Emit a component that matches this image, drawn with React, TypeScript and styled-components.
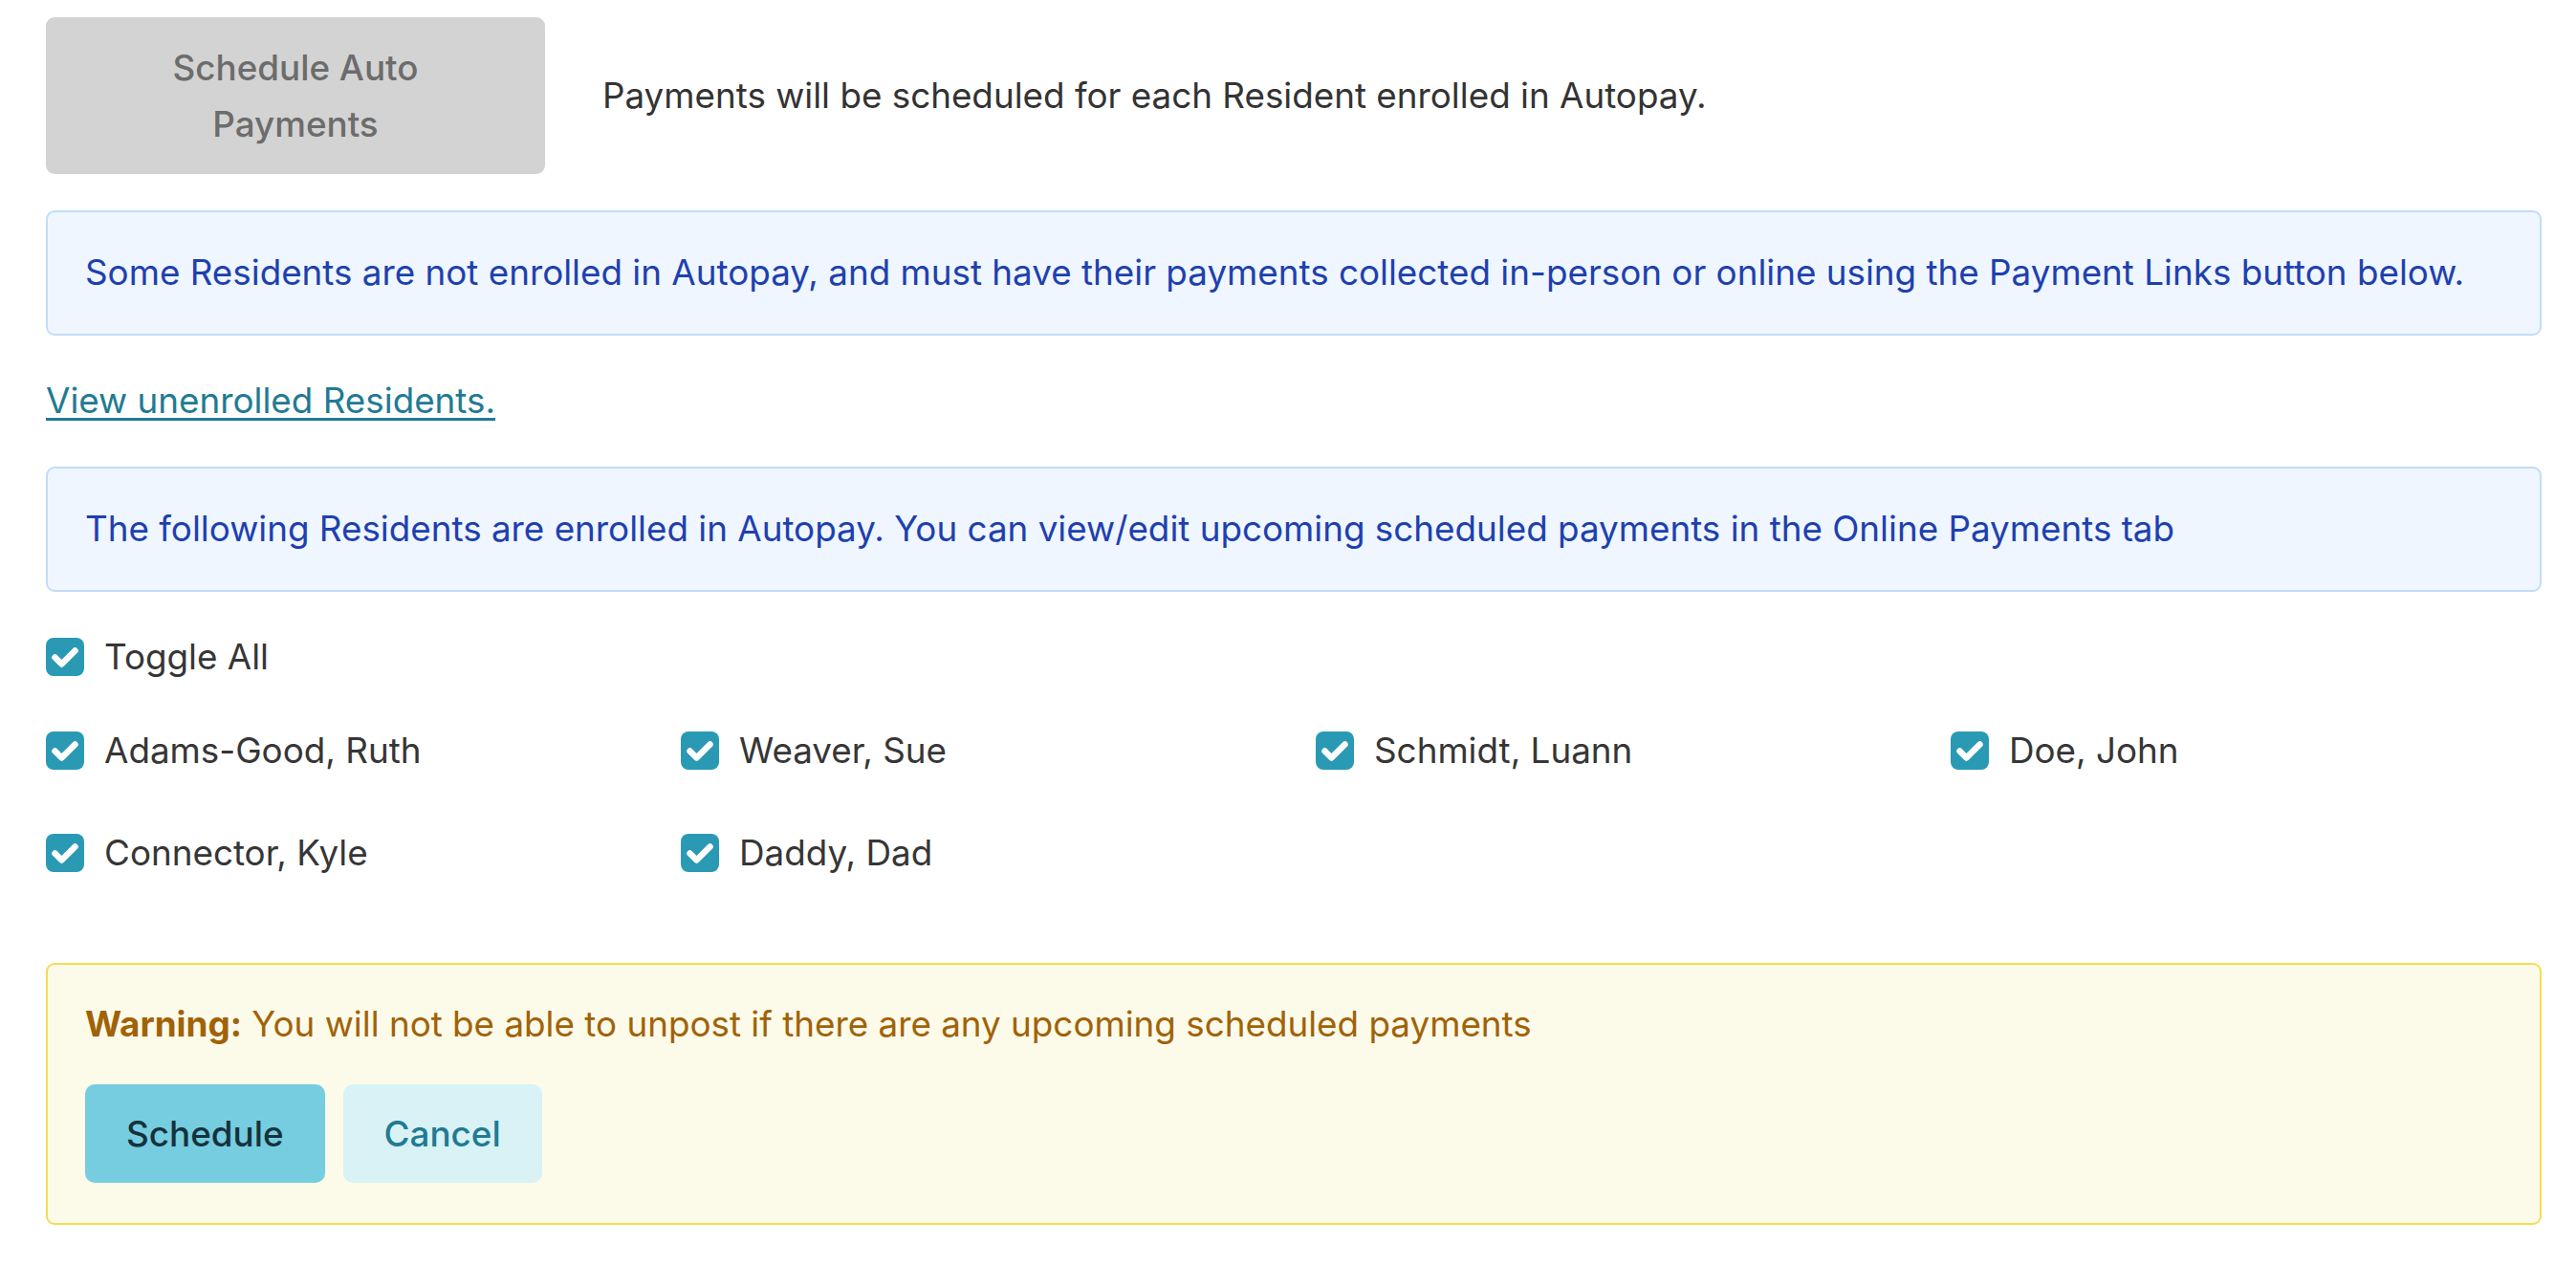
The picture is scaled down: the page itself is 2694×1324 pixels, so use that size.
import React from "react";
import styled, { createGlobalStyle } from "styled-components";

const GlobalStyle = createGlobalStyle`
  html, body {
    margin: 0;
    padding: 0;
    background: #ffffff;
  }
  body {
    font-family: Inter, "Noto Sans", "Liberation Sans", sans-serif;
    font-size: 36.8px;
    line-height: 54px;
    color: #333333;
  }
  * { box-sizing: border-box; }
`;

const Page = styled.div`
  padding: 18px 36px 40px 48px;
  display: flex;
  flex-direction: column;
`;

const TopRow = styled.div`
  display: flex;
  align-items: center;
  gap: 60px;
`;

const DisabledButton = styled.button`
  width: 522px;
  padding: 23px 64px;
  border: none;
  border-radius: 9px;
  background: #d3d3d3;
  color: #6c6c6c;
  font-family: inherit;
  font-size: 36.8px;
  font-weight: 500;
  line-height: 59px;
  text-align: center;
  cursor: not-allowed;
`;

const Note = styled.span`
  color: #333333;
`;

const InfoAlert = styled.div<{ $mt: number }>`
  margin-top: ${(p) => p.$mt}px;
  padding: 36px 39px 37px;
  background: #eff6ff;
  border: 2px solid #c1ddf8;
  border-radius: 9px;
  color: #1e40af;
`;

const Link = styled.a`
  margin-top: 41px;
  align-self: flex-start;
  color: #217a93;
  text-decoration: underline;
  text-decoration-thickness: 3px;
  text-underline-offset: 5px;
  cursor: pointer;
`;

const CheckLabel = styled.label`
  display: flex;
  align-items: center;
  gap: 21px;
  color: #363636;
  cursor: pointer;
`;

const ToggleRow = styled.div`
  margin-top: 41px;
  margin-bottom: 44px;
`;

const Grid = styled.div`
  display: grid;
  grid-template-columns: repeat(4, 1fr);
  column-gap: 46px;
  row-gap: 53px;
`;

const Box = styled.span`
  width: 40px;
  height: 40px;
  flex: none;
  border-radius: 8px;
  background: #2a9ab4;
  display: inline-flex;
  align-items: center;
  justify-content: center;
`;

const Warning = styled.div`
  margin-top: 88px;
  padding: 35px 39px 42px;
  background: #fcfbea;
  border: 2px solid #f5dc52;
  border-radius: 9px;
  color: #a16207;
`;

const Strong = styled.strong`
  font-weight: 700;
`;

const Actions = styled.div`
  margin-top: 36px;
  display: flex;
  gap: 19px;
`;

const ActionButton = styled.button<{ $primary?: boolean }>`
  height: 103px;
  padding: 0 43px;
  border: none;
  border-radius: 10px;
  background: ${(p) => (p.$primary ? "#76cddf" : "#d8f2f5")};
  color: ${(p) => (p.$primary ? "#15323c" : "#217a93")};
  font-family: inherit;
  font-size: 36.8px;
  font-weight: 500;
  line-height: 54px;
  cursor: pointer;
`;

const Check = () => (
  <Box>
    <svg width="40" height="40" viewBox="0 0 40 40">
      <path
        d="M9.5 20.5 L16.5 27.5 L30.5 13.5"
        fill="none"
        stroke="#ffffff"
        strokeWidth="6.5"
        strokeLinecap="round"
        strokeLinejoin="round"
      />
    </svg>
  </Box>
);

const residents = [
  "Adams-Good, Ruth",
  "Weaver, Sue",
  "Schmidt, Luann",
  "Doe, John",
  "Connector, Kyle",
  "Daddy, Dad",
];

export default function App() {
  return (
    <>
      <GlobalStyle />
      <Page>
        <TopRow>
          <DisabledButton disabled>Schedule Auto Payments</DisabledButton>
          <Note>Payments will be scheduled for each Resident enrolled in Autopay.</Note>
        </TopRow>
        <InfoAlert $mt={38}>
          Some Residents are not enrolled in Autopay, and must have their payments
          collected in-person or online using the Payment Links button below.
        </InfoAlert>
        <Link>View unenrolled Residents.</Link>
        <InfoAlert $mt={42}>
          The following Residents are enrolled in Autopay. You can view/edit upcoming
          scheduled payments in the Online Payments tab
        </InfoAlert>
        <ToggleRow>
          <CheckLabel>
            <Check />
            Toggle All
          </CheckLabel>
        </ToggleRow>
        <Grid>
          {residents.map((r) => (
            <CheckLabel key={r}>
              <Check />
              {r}
            </CheckLabel>
          ))}
        </Grid>
        <Warning>
          <div>
            <Strong>Warning:</Strong> You will not be able to unpost if there are any
            upcoming scheduled payments
          </div>
          <Actions>
            <ActionButton $primary>Schedule</ActionButton>
            <ActionButton>Cancel</ActionButton>
          </Actions>
        </Warning>
      </Page>
    </>
  );
}
